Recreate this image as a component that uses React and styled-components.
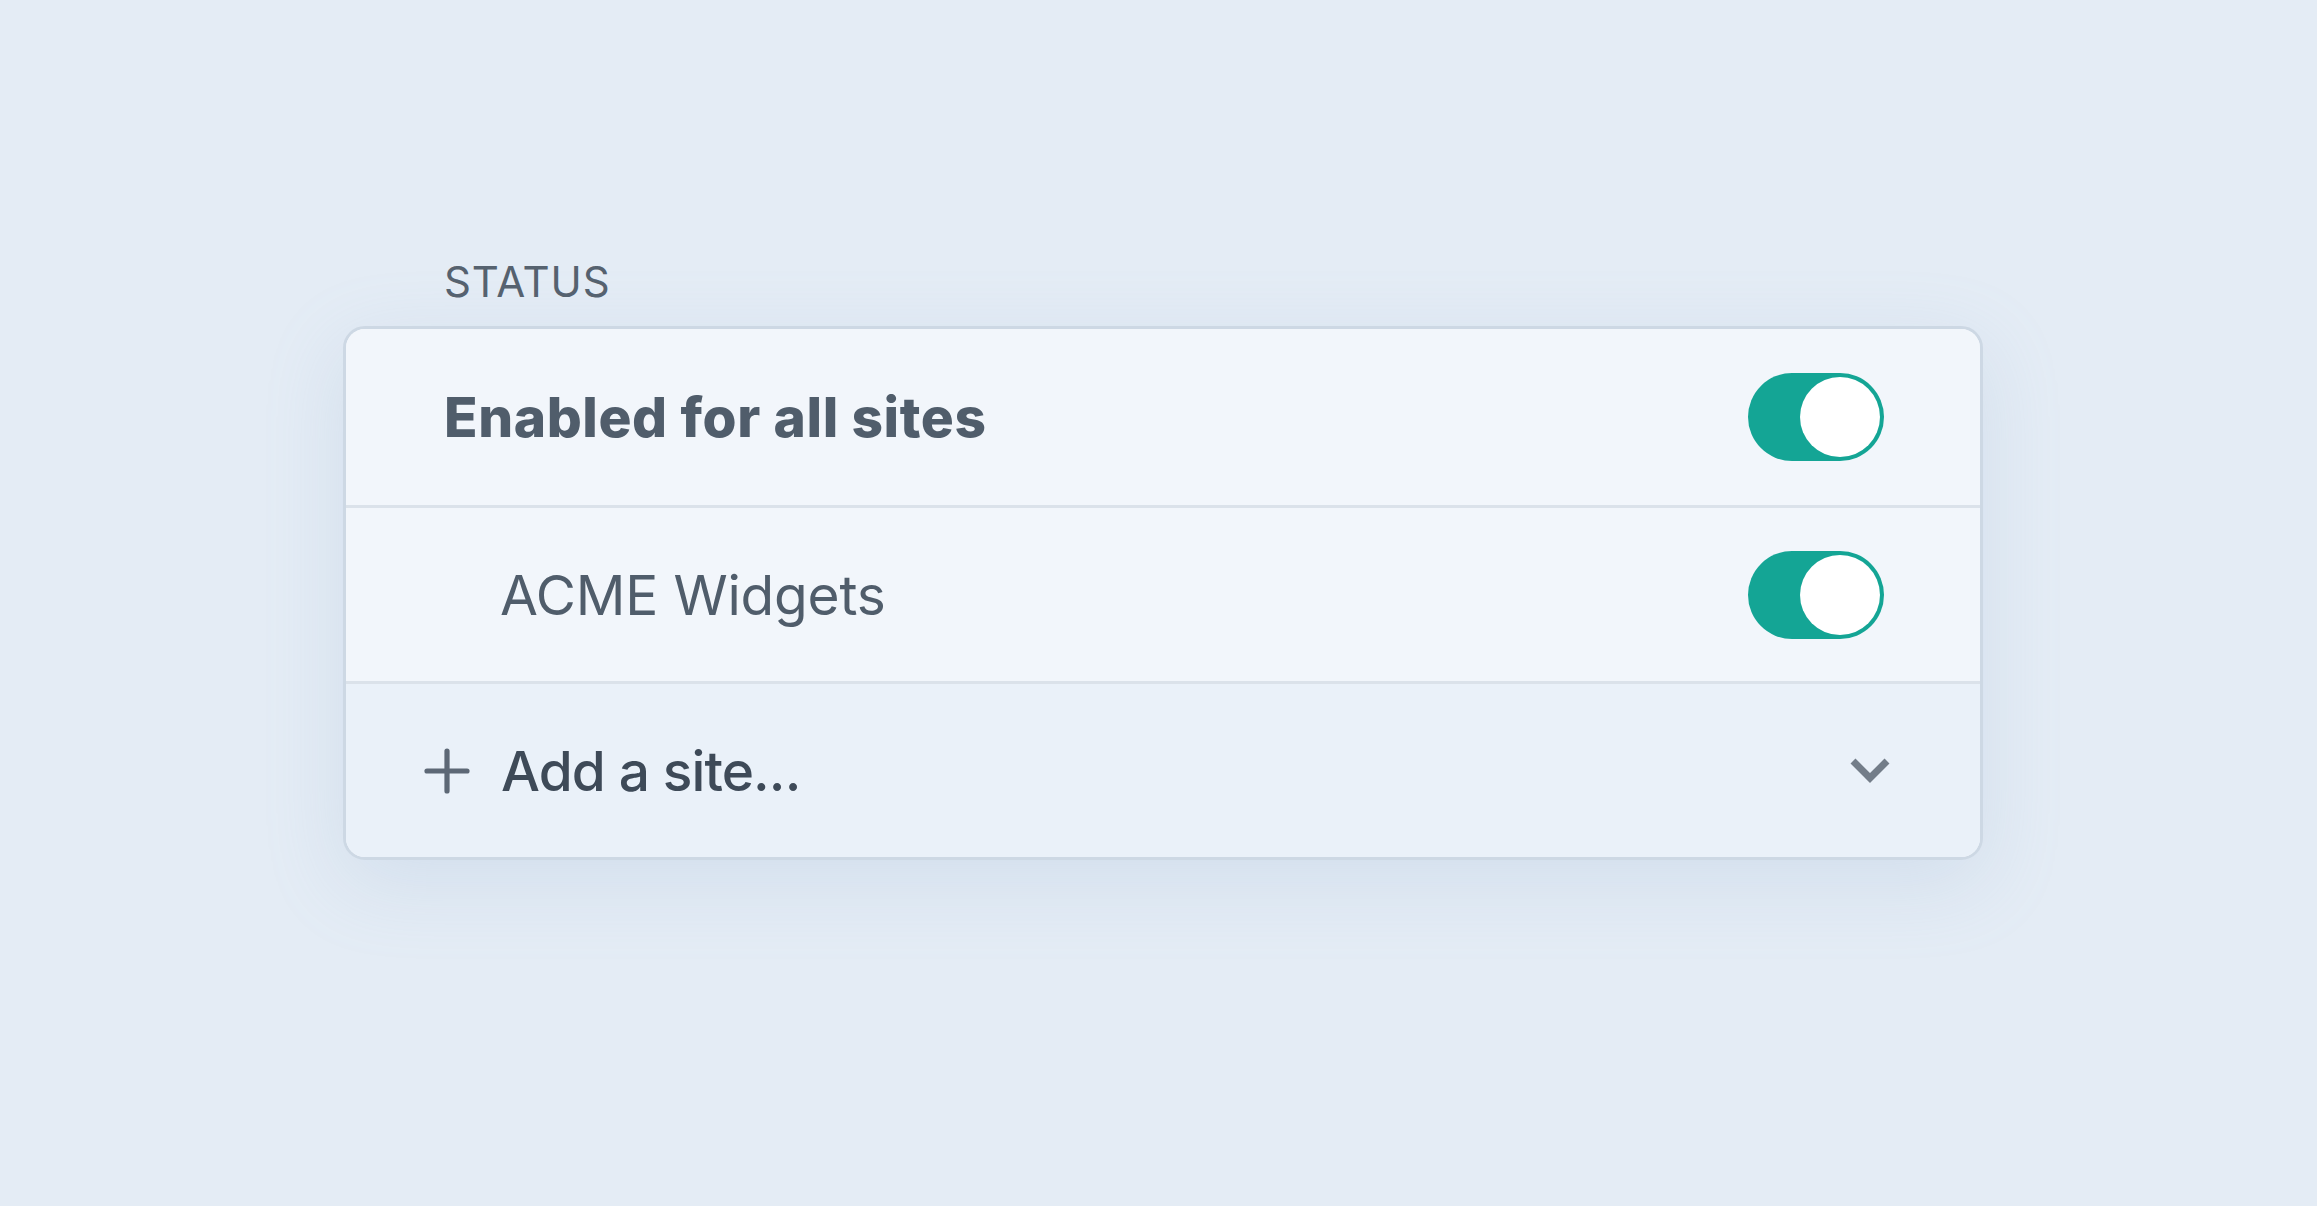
import styled, { createGlobalStyle } from "styled-components";

const GlobalStyle = createGlobalStyle`
    * {
        box-sizing: border-box;
    }
    body {
        margin: 0;
        background: #e4ecf5;
        font-family: Inter, "Noto Sans", sans-serif;
    }
`;

const Page = styled.div`
    min-height: 100vh;
    display: flex;
    justify-content: flex-start;
    padding: 257px 0 0 343px;
`;

const Section = styled.section`
    width: 1640px;
    display: flex;
    flex-direction: column;
`;

const Label = styled.div`
    margin: 0 0 19px 101px;
    font-size: 42px;
    line-height: 50px;
    color: #56626f;
    letter-spacing: 0.9px;
`;

const Card = styled.div`
    background: #f2f6fb;
    border: 3px solid #cdd8e4;
    border-radius: 22px;
    overflow: hidden;
    box-shadow: 0 22px 80px rgba(140, 170, 205, 0.2);
`;

const Row = styled.div`
    display: flex;
    align-items: center;
    height: ${(p) => p.$height}px;
    padding: 0 96px 0 ${(p) => p.$indent}px;
    background: ${(p) => (p.$muted ? "#eaf1f9" : "#f2f6fb")};
    border-top: ${(p) => (p.$first ? "none" : "3px solid #dbe2ea")};
`;

const Title = styled.span`
    font-size: 55px;
    font-weight: ${(p) => p.$weight || 400};
    color: ${(p) => (p.$dark ? "#3e4a58" : "#505d6b")};
    letter-spacing: ${(p) => p.$spacing || 0}px;
    flex: 1;
`;

const Toggle = styled.button`
    width: 136px;
    height: 88px;
    border: none;
    border-radius: 44px;
    background: #14a595;
    padding: 4px;
    display: flex;
    justify-content: ${(p) => (p.$on ? "flex-end" : "flex-start")};
    cursor: pointer;
`;

const Knob = styled.span`
    width: 80px;
    height: 80px;
    border-radius: 50%;
    background: #ffffff;
`;

const PlusIcon = styled.svg`
    width: 46px;
    height: 46px;
    margin-right: 31px;
    flex-shrink: 0;
`;

const Chevron = styled.svg`
    width: 40px;
    height: 26px;
    margin-right: -6px;
    flex-shrink: 0;
`;

export default function App() {
    return (
        <>
            <GlobalStyle />
            <Page>
                <Section>
                    <Label>STATUS</Label>
                    <Card>
                        <Row $first $height={176} $indent={98}>
                            <Title $weight={800} $spacing={0.6}>
                                Enabled for all sites
                            </Title>
                            <Toggle $on aria-label="Enabled for all sites">
                                <Knob />
                            </Toggle>
                        </Row>
                        <Row $height={176} $indent={154}>
                            <Title $spacing={-0.2}>ACME Widgets</Title>
                            <Toggle $on aria-label="ACME Widgets">
                                <Knob />
                            </Toggle>
                        </Row>
                        <Row $muted $height={176} $indent={78}>
                            <PlusIcon viewBox="0 0 46 46">
                                <path
                                    d="M23 3 V43 M3 23 H43"
                                    stroke="#5d6876"
                                    strokeWidth="5.2"
                                    strokeLinecap="round"
                                    fill="none"
                                />
                            </PlusIcon>
                            <Title $dark $weight={500} $spacing={-0.9}>
                                Add a site...
                            </Title>
                            <Chevron viewBox="0 0 40 26">
                                <polyline
                                    points="3,3 20,20 37,3"
                                    stroke="#737d89"
                                    strokeWidth="7"
                                    fill="none"
                                />
                            </Chevron>
                        </Row>
                    </Card>
                </Section>
            </Page>
        </>
    );
}
